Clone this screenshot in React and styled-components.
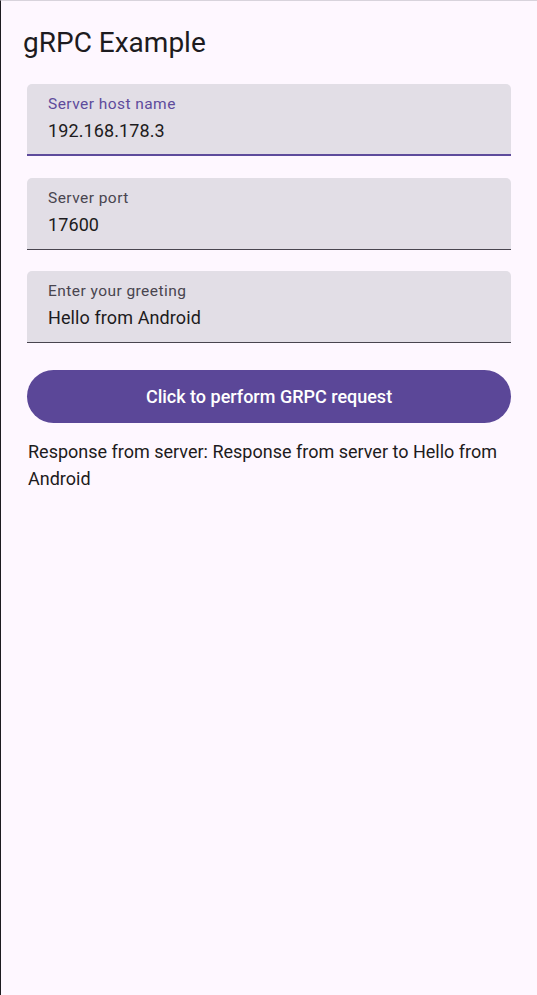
import styled, { createGlobalStyle } from "styled-components"

const GlobalStyle = createGlobalStyle`
html, body {
    margin: 0;
    padding: 0;
    background: #fef7ff;
}
body {
    font-family: Roboto, "Noto Sans", "Liberation Sans", sans-serif;
    color: #1d1b20;
}
`

const fields = [
    { label: "Server host name", value: "192.168.178.3", focused: true },
    { label: "Server port", value: "17600" },
    { label: "Enter your greeting", value: "Hello from Android" },
]

export default function App() {
    return (
        <>
            <GlobalStyle />
            <Screen>
                <Title>gRPC Example</Title>
                <Form>
                    {fields.map((f) => (
                        <Field key={f.label} $focused={f.focused}>
                            <Label $focused={f.focused}>{f.label}</Label>
                            <Value defaultValue={f.value} readOnly />
                        </Field>
                    ))}
                </Form>
                <RequestButton>Click to perform GRPC request</RequestButton>
                <Response>
                    Response from server: Response from server to Hello from Android
                </Response>
            </Screen>
        </>
    )
}

const Screen = styled.div`
box-sizing: border-box;
min-height: 100vh;
border-left: 1px solid #1d1b20;
border-top: 1px solid #d8d3dc;
padding: 24px 26px 0 26px;
display: flex;
flex-direction: column;
`

const Title = styled.h1`
margin: 0 0 23px -4px;
font-size: 28px;
line-height: 36px;
font-weight: 400;
color: #1d1b20;
`

const Form = styled.div`
display: flex;
flex-direction: column;
gap: 21.5px;
`

const Field = styled.div`
box-sizing: border-box;
height: 72px;
background: #e2dee6;
border-radius: 5px 5px 0 0;
border-bottom: ${(p) => (p.$focused ? "2px solid #5e4b9c" : "1px solid #49454f")};
padding: 10px 21px 0 21px;
display: flex;
flex-direction: column;
gap: 3px;
`

const Label = styled.span`
font-size: 15.5px;
line-height: 20px;
letter-spacing: 0.45px;
color: ${(p) => (p.$focused ? "#5e4b9c" : "#49454f")};
`

const Value = styled.input`
border: none;
outline: none;
background: transparent;
padding: 0;
margin: 0;
font-family: inherit;
font-size: 18px;
line-height: 27px;
height: 27px;
letter-spacing: 0.1px;
color: #1d1b20;
`

const RequestButton = styled.button`
margin-top: 27px;
height: 53px;
border: none;
border-radius: 27px;
background: #5b4798;
color: #ffffff;
font-family: inherit;
font-size: 18px;
font-weight: 500;
letter-spacing: 0;
cursor: pointer;
`

const Response = styled.p`
margin: 16px 0 0 1px;
font-size: 18px;
line-height: 26.7px;
letter-spacing: 0;
color: #1d1b20;
`
